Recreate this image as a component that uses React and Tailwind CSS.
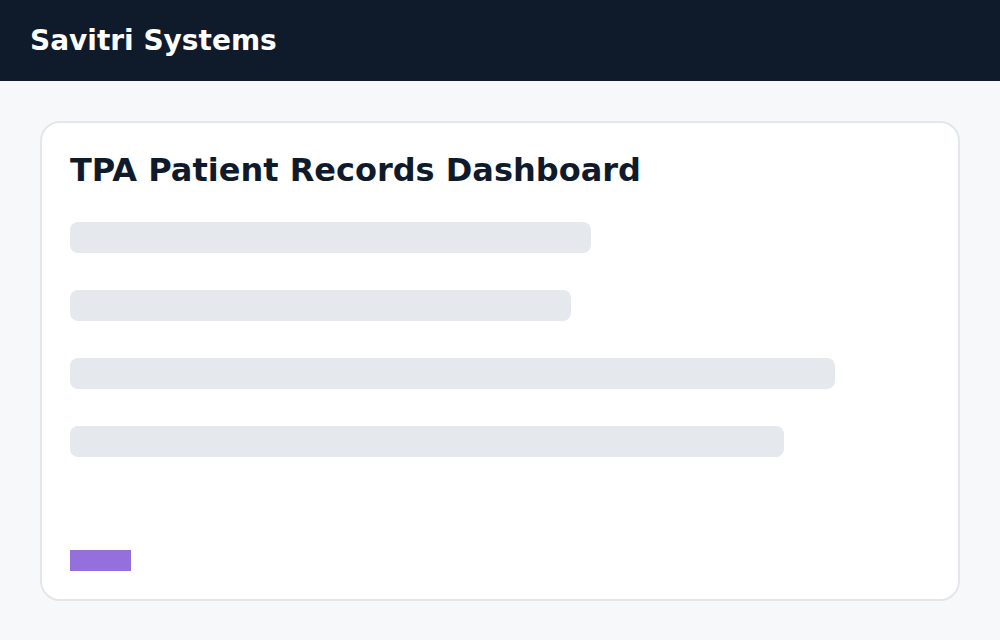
import React from "react";

const bars = ["w-[521px]", "w-[501px]", "w-[765px]", "w-[714px]"];

const App = () => {
  return (
    <div className="min-h-screen bg-[#f7f8fa] font-['DejaVu_Sans',sans-serif]">
      {/* Top bar */}
      <header className="h-[81px] bg-[#0f1b2b] px-[30px] flex items-center">
        <span className="text-white font-bold text-[28px]">Savitri Systems</span>
      </header>

      <main className="px-10 pt-10 pb-10">
        <div className="bg-white border-2 border-[#e3e6ea] rounded-[20px] p-[28px] h-[480px] flex flex-col">
          <h1 className="text-[#0f1b2b] font-bold text-[32px] leading-[38px]">
            TPA Patient Records Dashboard
          </h1>

          {/* Skeleton rows */}
          <div className="mt-[33px] flex flex-col gap-[37px]">
            {bars.map((w, i) => (
              <div key={i} className={`${w} h-[31px] rounded-lg bg-[#e5e8ec]`} />
            ))}
          </div>

          <div className="mt-auto w-[61px] h-[21px] bg-[#9370db]" />
        </div>
      </main>
    </div>
  );
};

export default App;
